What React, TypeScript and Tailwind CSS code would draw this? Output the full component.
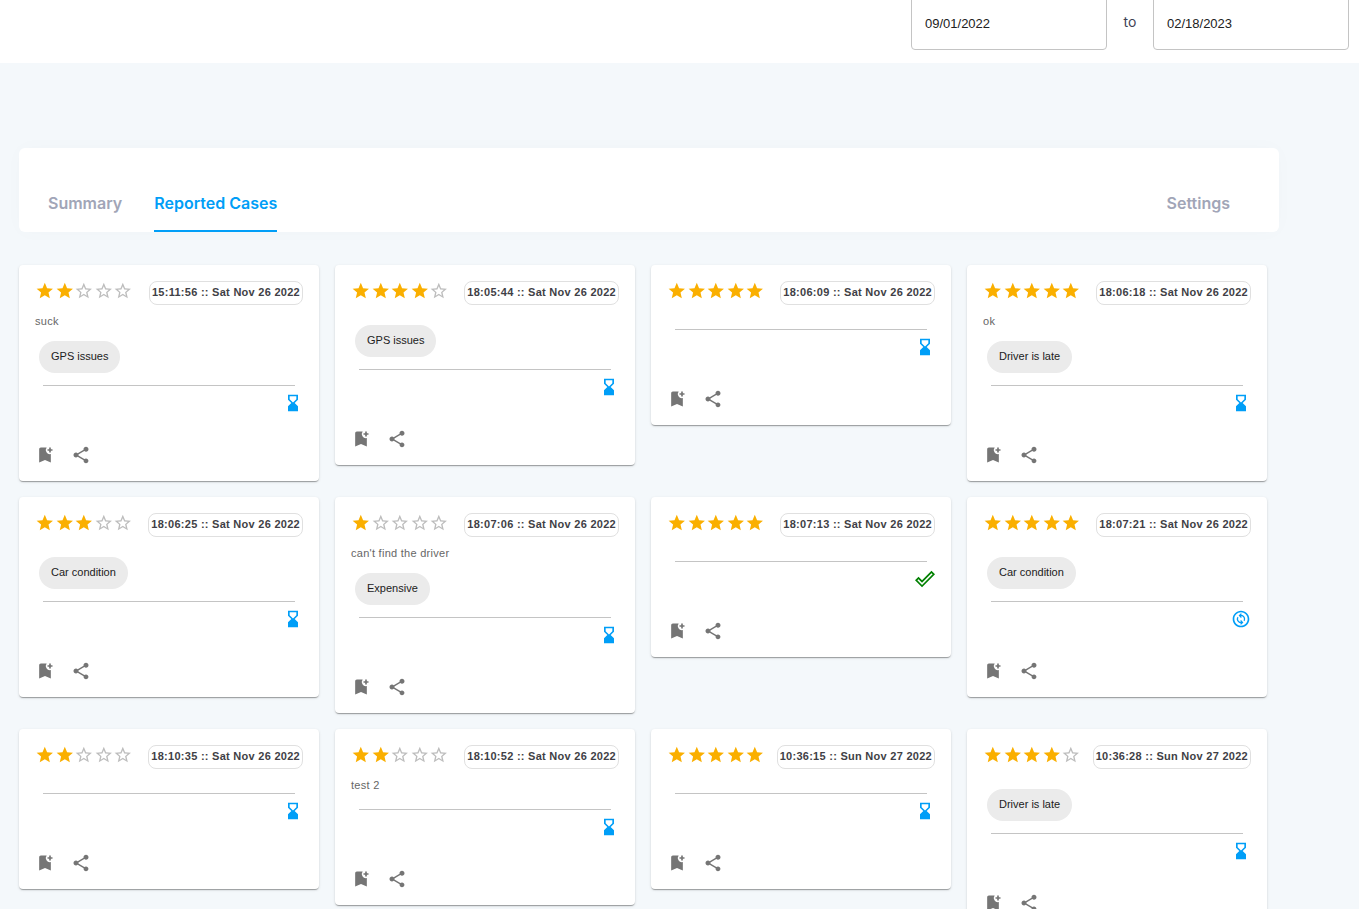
import { useState } from "react";
import {
  MdBookmarkAdd,
  MdDoneOutline,
  MdHourglassBottom,
  MdOutlineChangeCircle,
  MdShare,
  MdStar,
  MdStarBorder,
} from "react-icons/md";

type Status = "pending" | "done" | "processing";

interface ReportedCase {
  id: number;
  rating: number;
  time: string;
  comment?: string;
  tag?: string;
  status: Status;
}

const cases: ReportedCase[] = [
  { id: 1, rating: 2, time: "15:11:56 :: Sat Nov 26 2022", comment: "suck", tag: "GPS issues", status: "pending" },
  { id: 2, rating: 4, time: "18:05:44 :: Sat Nov 26 2022", tag: "GPS issues", status: "pending" },
  { id: 3, rating: 5, time: "18:06:09 :: Sat Nov 26 2022", status: "pending" },
  { id: 4, rating: 5, time: "18:06:18 :: Sat Nov 26 2022", comment: "ok", tag: "Driver is late", status: "pending" },
  { id: 5, rating: 3, time: "18:06:25 :: Sat Nov 26 2022", tag: "Car condition", status: "pending" },
  { id: 6, rating: 1, time: "18:07:06 :: Sat Nov 26 2022", comment: "can't find the driver", tag: "Expensive", status: "pending" },
  { id: 7, rating: 5, time: "18:07:13 :: Sat Nov 26 2022", status: "done" },
  { id: 8, rating: 5, time: "18:07:21 :: Sat Nov 26 2022", tag: "Car condition", status: "processing" },
  { id: 9, rating: 2, time: "18:10:35 :: Sat Nov 26 2022", status: "pending" },
  { id: 10, rating: 2, time: "18:10:52 :: Sat Nov 26 2022", comment: "test 2", status: "pending" },
  { id: 11, rating: 5, time: "10:36:15 :: Sun Nov 27 2022", status: "pending" },
  { id: 12, rating: 4, time: "10:36:28 :: Sun Nov 27 2022", tag: "Driver is late", status: "pending" },
];

const Rating = ({ value }: { value: number }) => (
  <div className="flex w-[98px]" role="img" aria-label={`${value} of 5 stars`}>
    {[1, 2, 3, 4, 5].map((n) =>
      n <= value ? (
        <MdStar key={n} className="h-5 min-w-0 flex-1 text-[#faaf00]" />
      ) : (
        <MdStarBorder key={n} className="h-5 min-w-0 flex-1 text-[#bdbdbd]" />
      )
    )}
  </div>
);

const StatusIcon = ({ status }: { status: Status }) => {
  switch (status) {
    case "done":
      return <MdDoneOutline className="size-5 text-[#008000]" />;
    case "processing":
      return <MdOutlineChangeCircle className="size-5 text-[#009ef7]" />;
    default:
      return <MdHourglassBottom className="size-5 text-[#009ef7]" />;
  }
};

const CaseCard = ({ item }: { item: ReportedCase }) => (
  <article className="rounded bg-white shadow-[0_2px_1px_-1px_rgba(0,0,0,0.2),0_1px_1px_0_rgba(0,0,0,0.14),0_1px_3px_0_rgba(0,0,0,0.12)]">
    <div className="p-4">
      <div className="flex items-start justify-between">
        <Rating value={item.rating} />
        <time className="h-6 rounded-lg border border-[#e0e0e0] px-0.5 text-[11px] leading-5 font-bold tracking-wide whitespace-nowrap text-[#3f3f46]">
          {item.time}
        </time>
      </div>
      <div className="pt-2">
        {item.comment && (
          <p className="text-[11px] leading-4 tracking-wide text-[#666666]">
            {item.comment}
          </p>
        )}
      </div>
      <div className="flex pt-2">
        {item.tag && (
          <span className="m-1 h-8 rounded-full bg-[#ebebeb] px-3 text-[11px] leading-[30px] text-[#212121]">
            {item.tag}
          </span>
        )}
      </div>
      <hr className="mx-2 mt-2 border-[#c4c4c4]" />
      <div className="mt-[7px] flex justify-end">
        <StatusIcon status={item.status} />
      </div>
    </div>
    <div className="flex p-2 text-[#757575]">
      <button className="rounded-full p-2" aria-label="Bookmark">
        <MdBookmarkAdd className="size-5" />
      </button>
      <button className="rounded-full p-2" aria-label="Share">
        <MdShare className="size-5" />
      </button>
    </div>
  </article>
);

const tabs = ["Summary", "Reported Cases", "Settings"];

const ReportedCasesPage = () => {
  const [activeTab, setActiveTab] = useState("Reported Cases");
  const [from, setFrom] = useState("09/01/2022");
  const [to, setTo] = useState("02/18/2023");

  return (
    <div className="min-h-screen bg-[#f4f8fb] font-['Liberation_Sans',Arial,sans-serif]">
      {/* date range */}
      <header className="flex items-center justify-end bg-white pr-[10px] pb-[13px]">
        <div className="-mt-[6px] flex items-center">
          <input
            type="text"
            aria-label="From date"
            value={from}
            onChange={(e) => setFrom(e.target.value)}
            className="h-14 w-[196px] rounded border border-[#c4c4c4] px-[13px] pt-0.5 text-[13px] text-[#212121]"
          />
          <span className="w-[46px] text-center font-['Inter',sans-serif] text-sm text-[#3f4254]">
            to
          </span>
          <input
            type="text"
            aria-label="To date"
            value={to}
            onChange={(e) => setTo(e.target.value)}
            className="h-14 w-[196px] rounded border border-[#c4c4c4] px-[13px] pt-0.5 text-[13px] text-[#212121]"
          />
        </div>
      </header>

      <main className="mr-20 ml-[19px] pt-[85px] pb-8">
        {/* tabs */}
        <nav className="flex gap-8 rounded-md bg-white pt-7 pr-[49px] pl-[29px] font-['Inter',sans-serif] text-base font-semibold shadow-[0_0_20px_0_rgba(76,87,125,0.02)]">
          {tabs.map((tab) => (
            <button
              key={tab}
              onClick={() => setActiveTab(tab)}
              className={`h-14 border-b-2 last:ml-auto ${
                activeTab === tab
                  ? "border-[#009ef7] text-[#009ef7]"
                  : "border-transparent text-[#a1a5b7]"
              }`}
            >
              {tab}
            </button>
          ))}
        </nav>

        <div className="mt-[33px] grid grid-cols-[repeat(auto-fill,300px)] items-start gap-4">
          {cases.map((item) => (
            <CaseCard key={item.id} item={item} />
          ))}
        </div>
      </main>
    </div>
  );
};

export default ReportedCasesPage;
